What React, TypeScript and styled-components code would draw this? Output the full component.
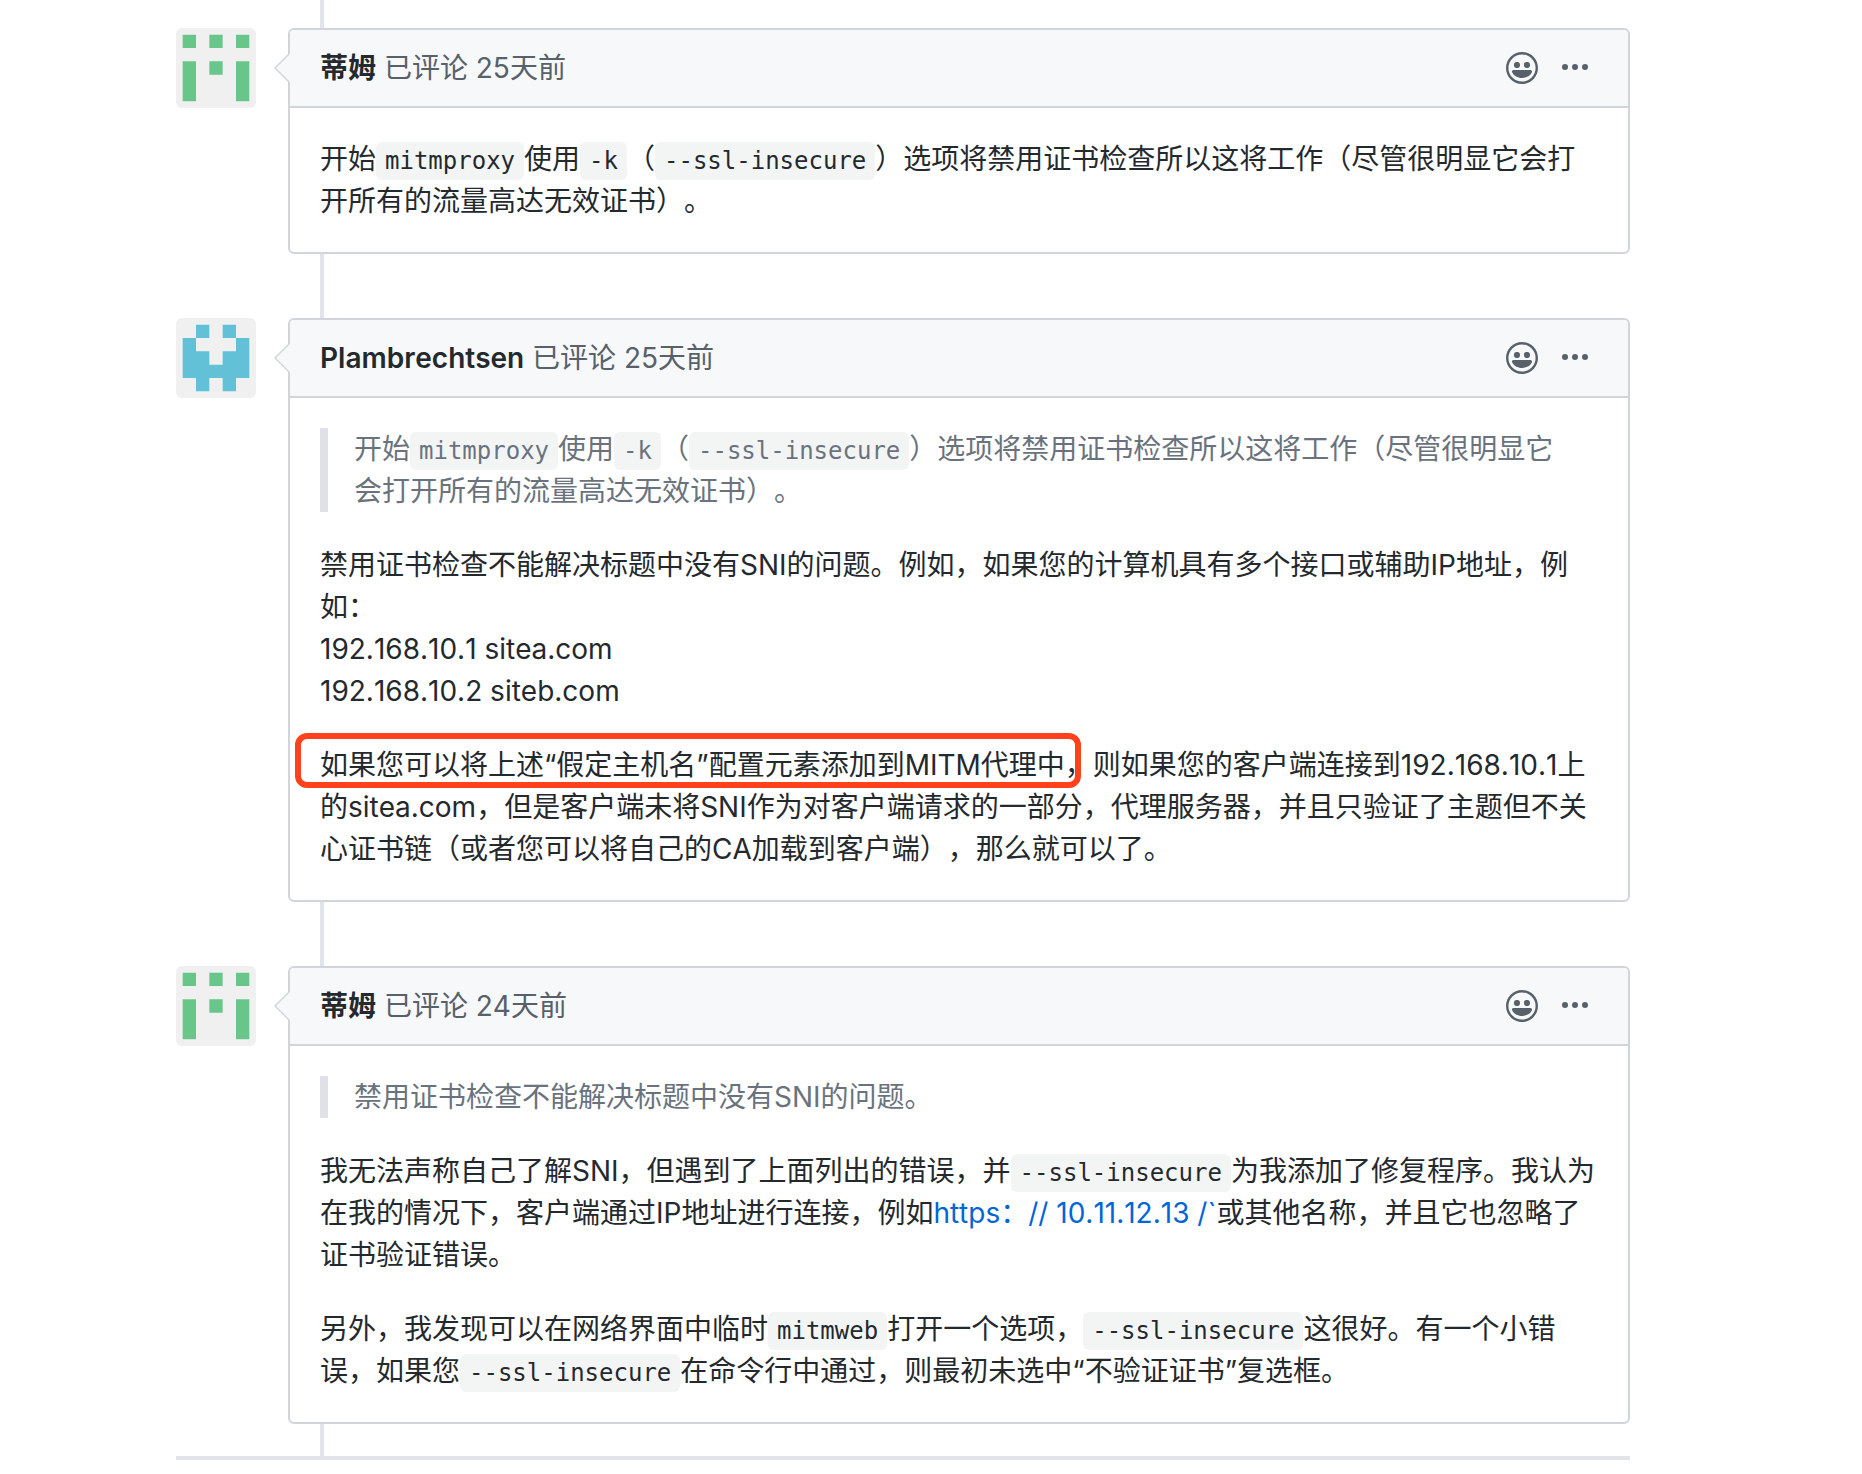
import React from "react";
import styled, { createGlobalStyle } from "styled-components";

const GlobalStyle = createGlobalStyle`
  *, *::before, *::after {
    box-sizing: border-box;
  }
  body {
    margin: 0;
    background: #fff;
    color: #24292e;
    font-family: Inter, "Noto Sans CJK SC", sans-serif;
    font-size: 28px;
    font-kerning: none;
    line-height: 42px;
    text-spacing-trim: space-all;
  }
`;

const Page = styled.main`
  padding: 0 232px 14px 176px;
`;

const Timeline = styled.div`
  border-bottom: 4px solid #e1e4e8;
`;

const TimelineItem = styled.article<{ $first?: boolean }>`
  position: relative;
  display: flex;
  align-items: flex-start;
  gap: 32px;
  padding: ${(p) => (p.$first ? "28px" : "32px")} 0 32px;

  &::before {
    content: "";
    position: absolute;
    top: 0;
    bottom: 0;
    left: 144px;
    width: 4px;
    background: #e1e4e8;
  }
`;

const AvatarLink = styled.a`
  flex: none;
  display: block;
  width: 80px;
  height: 80px;
  border-radius: 6px;
  overflow: hidden;
  background: #f0f0f0;

  svg {
    display: block;
    width: 100%;
    height: 100%;
  }
`;

const Card = styled.div`
  position: relative;
  flex: 1;
  min-width: 0;
  background: #fff;
  border: 2px solid #d1d5da;
  border-radius: 6px;

  &::before,
  &::after {
    content: "";
    position: absolute;
    top: 22px;
    border: 16px solid transparent;
    border-left-width: 0;
  }
  &::before {
    left: -16px;
    border-right-color: #d1d5da;
  }
  &::after {
    left: -14px;
    border-right-color: #f6f8fa;
  }
`;

const CardHeader = styled.header`
  display: flex;
  align-items: center;
  justify-content: space-between;
  min-height: 78px;
  padding: 0 32px 0 30px;
  background: #f6f8fa;
  border-bottom: 2px solid #d1d5da;
  border-radius: 4px 4px 0 0;
`;

const Heading = styled.h3`
  margin: 0;
  color: #586069;
  font-size: 28px;
  font-weight: 400;
`;

const Author = styled.a`
  color: #24292e;
  font-weight: 600;
  text-decoration: none;
`;

const Timestamp = styled.a`
  color: inherit;
  text-decoration: none;
`;

const Actions = styled.div`
  display: flex;
  align-items: center;
  gap: 8px;
`;

const ActionButton = styled.button`
  display: flex;
  padding: 8px;
  border: 0;
  background: none;
  color: #586069;
  cursor: pointer;

  svg {
    display: block;
    height: 32px;
    fill: currentColor;
  }
`;

const CardBody = styled.div`
  display: flex;
  flex-direction: column;
  gap: 32px;
  padding: 30px;
`;

const Paragraph = styled.p`
  margin: 0;
`;

const Quote = styled.blockquote`
  margin: 0;
  padding: 0 26px;
  border-left: 8px solid #e0e1e6;
  color: #6a737d;
`;

const Code = styled.code`
  padding: 5px 9px;
  border-radius: 6px;
  background: #f3f5f5;
  font-family: "DejaVu Sans Mono", monospace;
  font-size: 24px;
  line-height: 28px;
`;

const BodyLink = styled.a`
  color: #0366d6;
  text-decoration: none;
`;

const Marked = styled.span`
  position: relative;
  display: inline-block;
  vertical-align: top;

  &::after {
    content: "";
    position: absolute;
    inset: -11px 12px -2px -25px;
    border: 6px solid #ff421c;
    border-radius: 12px;
    pointer-events: none;
  }
`;

const identicons = {
  timm: { color: "#68c68b", rows: ["10101", "00000", "10101", "10001", "10001"] },
  plambrechtsen: { color: "#62c1d6", rows: ["01010", "10001", "11011", "11111", "01010"] },
};

type UserKey = keyof typeof identicons;

function Identicon({ user }: { user: UserKey }) {
  const { color, rows } = identicons[user];
  const d = rows
    .flatMap((row, y) =>
      row.split("").map((cell, x) => (cell === "1" ? `M${1 + x * 2} ${1 + y * 2}h2v2h-2z` : ""))
    )
    .join("");
  return (
    <svg viewBox="0 0 12 12" aria-hidden="true">
      <path d={d} fill={color} />
    </svg>
  );
}

const SmileyIcon = () => (
  <svg viewBox="0 0 16 16" width="32" aria-hidden="true">
    <path
      fillRule="evenodd"
      d="M8 0C3.58 0 0 3.58 0 8s3.58 8 8 8 8-3.58 8-8-3.58-8-8-8zm4.81 12.81a6.72 6.72 0 01-2.17 1.45c-.83.36-1.72.53-2.64.53-.92 0-1.81-.17-2.64-.53-.81-.34-1.55-.83-2.17-1.45a6.773 6.773 0 01-1.45-2.17A6.59 6.59 0 011.21 8c0-.92.17-1.81.53-2.64.34-.81.83-1.55 1.45-2.17.62-.62 1.36-1.11 2.17-1.45A6.59 6.59 0 018 1.21c.92 0 1.81.17 2.64.53.81.34 1.55.83 2.17 1.45.62.62 1.11 1.36 1.45 2.17.36.83.53 1.72.53 2.64 0 .92-.17 1.81-.53 2.64-.34.81-.83 1.55-1.45 2.17zM4 6.8v-.59c0-.66.53-1.19 1.2-1.19h.59c.66 0 1.19.53 1.19 1.19v.59c0 .67-.53 1.19-1.19 1.19H5.2C4.53 8 4 7.47 4 6.8zm5 0v-.59c0-.66.53-1.19 1.2-1.19h.59c.66 0 1.19.53 1.19 1.19v.59c0 .67-.53 1.19-1.19 1.19h-.59C9.53 8 9 7.47 9 6.8zm4 3.2c-.72 1.88-2.91 3-5 3s-4.28-1.13-5-3c-.14-.39.23-1 .66-1h8.59c.41 0 .89.61.75 1z"
    />
  </svg>
);

const KebabIcon = () => (
  <svg viewBox="0 0 13 16" width="26" aria-hidden="true">
    <path d="M1.5 9a1.5 1.5 0 100-3 1.5 1.5 0 000 3zm5 0a1.5 1.5 0 100-3 1.5 1.5 0 000 3zM13 7.5a1.5 1.5 0 11-3 0 1.5 1.5 0 013 0z" />
  </svg>
);

interface CommentProps {
  user: UserKey;
  name: string;
  time: string;
  first?: boolean;
  children: React.ReactNode;
}

function Comment({ user, name, time, first, children }: CommentProps) {
  return (
    <TimelineItem $first={first}>
      <AvatarLink href="#" aria-label={name}>
        <Identicon user={user} />
      </AvatarLink>
      <Card>
        <CardHeader>
          <Heading>
            <Author href="#">{name}</Author> 已评论 <Timestamp href="#">{time}</Timestamp>
          </Heading>
          <Actions>
            <ActionButton type="button" aria-label="添加表情">
              <SmileyIcon />
            </ActionButton>
            <ActionButton type="button" aria-label="更多选项">
              <KebabIcon />
            </ActionButton>
          </Actions>
        </CardHeader>
        <CardBody>{children}</CardBody>
      </Card>
    </TimelineItem>
  );
}

const InsecureTip = () => (
  <>
    开始<Code>mitmproxy</Code>使用<Code>-k</Code>（<Code>--ssl-insecure</Code>
    ）选项将禁用证书检查所以这将工作（尽管很明显它会打开所有的流量高达无效证书）。
  </>
);

export default function App() {
  return (
    <Page lang="zh-CN">
      <GlobalStyle />
      <Timeline>
        <Comment user="timm" name="蒂姆" time="25天前" first>
          <Paragraph>
            <InsecureTip />
          </Paragraph>
        </Comment>

        <Comment user="plambrechtsen" name="Plambrechtsen" time="25天前">
          <Quote>
            <InsecureTip />
          </Quote>
          <Paragraph>
            禁用证书检查不能解决标题中没有SNI的问题。例如，如果您的计算机具有多个接口或辅助IP地址，例如：
            <br />
            192.168.10.1 sitea.com
            <br />
            192.168.10.2 siteb.com
          </Paragraph>
          <Paragraph>
            <Marked>如果您可以将上述“假定主机名”配置元素添加到MITM代理中，</Marked>
            则如果您的客户端连接到192.168.10.1上的sitea.com，但是客户端未将SNI作为对客户端请求的一部分，代理服务器，并且只验证了主题但不关心证书链（或者您可以将自己的CA加载到客户端），那么就可以了。
          </Paragraph>
        </Comment>

        <Comment user="timm" name="蒂姆" time="24天前">
          <Quote>禁用证书检查不能解决标题中没有SNI的问题。</Quote>
          <Paragraph>
            我无法声称自己了解SNI，但遇到了上面列出的错误，并<Code>--ssl-insecure</Code>
            为我添加了修复程序。我认为在我的情况下，客户端通过IP地址进行连接，例如
            <BodyLink href="#">https：// 10.11.12.13 /`</BodyLink>
            或其他名称，并且它也忽略了证书验证错误。
          </Paragraph>
          <Paragraph>
            另外，我发现可以在网络界面中临时<Code>mitmweb</Code>打开一个选项，
            <Code>--ssl-insecure</Code>这很好。有一个小错误，如果您<Code>--ssl-insecure</Code>
            在命令行中通过，则最初未选中“不验证证书”复选框。
          </Paragraph>
        </Comment>
      </Timeline>
    </Page>
  );
}
